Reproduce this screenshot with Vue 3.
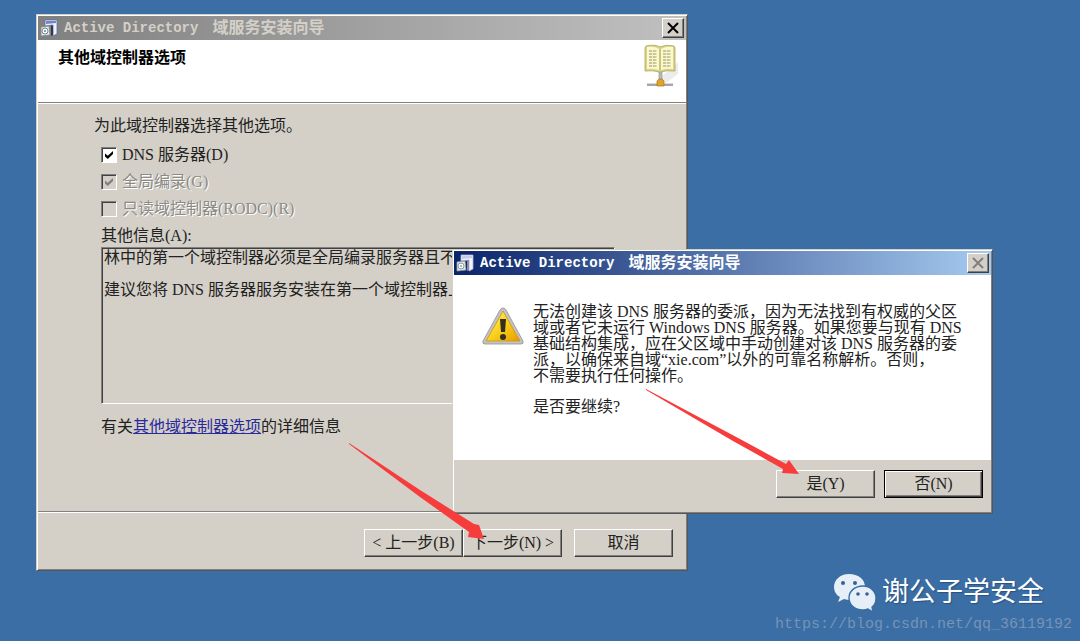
<script setup>
import { ref } from 'vue'

const title = { latin: 'Active Directory', han: '域服务安装向导' }

const options = ref([
  { id: 'opt-dns', label: 'DNS 服务器(D)', checked: true, disabled: false },
  { id: 'opt-gc', label: '全局编录(G)', checked: true, disabled: true },
  { id: 'opt-rodc', label: '只读域控制器(RODC)(R)', checked: false, disabled: true }
])

const info =
  '林中的第一个域控制器必须是全局编录服务器且不能\n\n建议您将 DNS 服务器服务安装在第一个域控制器上'

const warning = [
  '无法创建该 DNS 服务器的委派，因为无法找到有权威的父区',
  '域或者它未运行 Windows DNS 服务器。如果您要与现有 DNS',
  '基础结构集成，应在父区域中手动创建对该 DNS 服务器的委',
  '派，以确保来自域“xie.com”以外的可靠名称解析。否则，',
  '不需要执行任何操作。'
]
</script>

<template>
  <main class="desktop">
    <section class="window wizard" aria-label="安装向导">
      <header class="titlebar inactive">
        <svg class="app-icon" viewBox="0 0 18 18" aria-hidden="true">
          <path d="M5 1h12v14l-4 2V6L5 7z" fill="#eef2fd" stroke="#5a6ca4" stroke-width=".8" />
          <path d="M6 2h10v2L6 5z" fill="#6f86c8" />
          <path d="M1 8l8-1 1 9-9 1z" fill="#e8e8e8" stroke="#888" stroke-width=".8" />
          <circle cx="5" cy="12" r="3" fill="#fff" stroke="#6d8798" />
          <circle cx="5" cy="12" r="1" fill="#66808f" />
          <path d="M11 6l2 1v9l-2 1z" fill="#33384a" />
        </svg>
        <h1 class="caption"><span class="latin">{{ title.latin }}</span><span>{{ title.han }}</span></h1>
        <button class="close" type="button" aria-label="关闭">
          <svg viewBox="0 0 14 14"><path d="M2 2l10 10M12 2L2 12" /></svg>
        </button>
      </header>
      <div class="banner">
        <h2>其他域控制器选项</h2>
        <svg class="book" viewBox="0 0 40 46" aria-hidden="true">
          <path d="M20 34L38 18v12L26 39z" fill="#ececec" />
          <path d="M19 27h3v11h-3z" fill="#b9bcc4" stroke="#888" stroke-width=".6" />
          <path d="M7 39h26v3H7z" fill="#a4a6a8" />
          <path d="M7 39h26v1H7z" fill="#d7d7d7" />
          <path d="M17 37l2-2h3l2 2v5h-7z" fill="#dfa52a" stroke="#ad7514" stroke-width=".7" />
          <path d="M5 4l1-2q9-2 14 1q6-3 14-1l1 2v23q-9-1-14 1h-2q-6-2-14-1z" fill="#dbd58b" stroke="#aaa557" stroke-width=".8" />
          <path d="M7 3q8-1 12 2v21q-6-2-12-1z" fill="#fbf8ce" />
          <path d="M21 5q5-3 12-2v22q-7-1-12 1z" fill="#fbf8ce" />
          <path d="M19 5h2v21h-2z" fill="#cbc47b" />
          <path d="M9 7h8M9 10h8M9 13h8M9 16h8M9 19h8M9 22h8M23 7h8M23 10h8M23 13h8M23 16h8M23 19h8M23 22h8" stroke="#97915e" stroke-width="1.2" stroke-dasharray="3 .8" />
        </svg>
      </div>
      <div class="content">
        <p class="line">为此域控制器选择其他选项。</p>
        <div class="group">
          <div v-for="o in options" :key="o.id" class="option" :class="{ off: o.disabled }">
            <input :id="o.id" v-model="o.checked" type="checkbox" :disabled="o.disabled" />
            <label :for="o.id">{{ o.label }}</label>
          </div>
          <label class="line" for="info">其他信息(A):</label>
        </div>
        <textarea id="info" class="info" readonly :value="info"></textarea>
        <p class="line more">有关<a href="#options">其他域控制器选项</a>的详细信息</p>
      </div>
      <footer class="actions">
        <div class="pair">
          <button class="btn" type="button">&lt; 上一步(B)</button>
          <button class="btn" type="button">下一步(N) &gt;</button>
        </div>
        <button class="btn" type="button">取消</button>
      </footer>
    </section>

    <section class="window dialog" role="alertdialog" aria-labelledby="dlg-title" aria-describedby="dlg-text">
      <header class="titlebar active">
        <svg class="app-icon" viewBox="0 0 18 18" aria-hidden="true">
          <path d="M5 1h12v14l-4 2V6L5 7z" fill="#f3f4fb" stroke="#a9b2d4" stroke-width=".8" />
          <path d="M6 2h10v2L6 5z" fill="#c3cbe6" />
          <path d="M1 8l8-1 1 9-9 1z" fill="#e8e8e8" stroke="#999" stroke-width=".8" />
          <circle cx="5" cy="12" r="3" fill="#fff" stroke="#8299a8" />
          <circle cx="5" cy="12" r="1" fill="#8c9ba6" />
          <path d="M11 6l2 1v9l-2 1z" fill="#8a8da2" />
        </svg>
        <h1 id="dlg-title" class="caption"><span class="latin">{{ title.latin }}</span><span>{{ title.han }}</span></h1>
        <button class="close" type="button" aria-label="关闭" disabled>
          <svg viewBox="0 0 14 14"><path d="M2 2l10 10M12 2L2 12" /></svg>
        </button>
      </header>
      <div class="message">
        <svg class="warn" viewBox="0 0 42 38" aria-hidden="true">
          <defs>
            <linearGradient id="gold" x1="0" y1="0" x2="1" y2="1">
              <stop offset="0" stop-color="#fff27a" />
              <stop offset=".5" stop-color="#fbd21c" />
              <stop offset="1" stop-color="#e69a00" />
            </linearGradient>
          </defs>
          <path d="M21 1q2 0 3 2l17 31q1 3-2 3H3q-3 0-2-3L18 3q1-2 3-2z" fill="#c3c3c6" stroke="#8f8f94" stroke-width=".8" />
          <path d="M21 4L38 34H4z" fill="url(#gold)" stroke="#c99512" stroke-width=".8" />
          <path d="M18 12h6l-1 13h-4z" fill="#33301c" />
          <circle cx="21" cy="30" r="3" fill="#33301c" />
        </svg>
        <div id="dlg-text" class="text">
          <p><span v-for="w in warning" :key="w" class="row">{{ w }}</span></p>
          <p>是否要继续?</p>
        </div>
      </div>
      <footer class="choices">
        <button class="btn" type="button">是(Y)</button>
        <button class="btn default" type="button">否(N)</button>
      </footer>
    </section>

    <svg class="arrows" viewBox="0 0 1080 641" aria-hidden="true">
      <path d="M349 443L420 490L474 524L479 525L484 539L468 537L469 532L420 497L349 444z" />
      <path d="M646 389L740 439L786 464L789 460L799 474L782 473L783 469L733 441L646 390z" />
    </svg>

    <aside class="credit">
      <div class="brand">
        <svg class="wechat" viewBox="0 0 44 40" aria-hidden="true">
          <path d="M16 2C7 2 1 8 1 15c0 4 2 8 6 10l-2 5 6-3q3 1 6 1c8 0 15-5 15-13S25 2 16 2z" fill="#e6eef8" />
          <circle cx="10" cy="11" r="2" fill="#3a5f8c" />
          <circle cx="22" cy="11" r="2" fill="#3a5f8c" />
          <path d="M30 14c-8 0-14 5-14 12s6 12 14 12q3 0 5-1l5 3-1-5c3-2 4-5 4-9 0-7-6-12-13-12z" fill="#e6eef8" stroke="#3a6ea5" stroke-width="1.4" />
          <circle cx="25" cy="22" r="1.8" fill="#3a5f8c" />
          <circle cx="34" cy="22" r="1.8" fill="#3a5f8c" />
        </svg>
        <span>谢公子学安全</span>
      </div>
      <div class="url">https://blog.csdn.net/qq_36119192</div>
    </aside>
  </main>
</template>

<style>
body {
  margin: 0;
}
</style>

<style scoped>
.desktop {
  position: relative;
  min-height: 100vh;
  overflow: hidden;
  background: #3a6ea5;
  color: #222;
  font: 16px/20px "Liberation Serif", "Noto Sans CJK SC", serif;
}
.desktop * {
  box-sizing: border-box;
}
h1,
h2,
p {
  margin: 0;
  font-size: 16px;
}
.window {
  position: absolute;
  display: flex;
  flex-direction: column;
  padding: 1px;
  border: 1px solid;
  border-color: #d4d0c8 #555 #555 #d4d0c8;
  background: #d4d0c8;
  box-shadow: inset 1px 1px #fff, inset -1px -1px #808080;
}
.wizard {
  left: 36px;
  top: 14px;
  width: 652px;
}
.dialog {
  left: 452px;
  top: 249px;
  width: 541px;
}
.titlebar {
  display: flex;
  align-items: center;
  height: 24px;
  padding: 0 2px;
}
.inactive {
  background: linear-gradient(90deg, #808080, #c0c0c0);
  color: #d4d0c8;
}
.active {
  background: linear-gradient(90deg, #0a246a, #a6caf0);
  color: #fff;
}
.app-icon {
  width: 18px;
  height: 18px;
  flex: none;
}
.caption {
  display: flex;
  flex: 1;
  gap: 14px;
  margin-left: 6px;
  font-weight: bold;
  white-space: nowrap;
}
.latin {
  font-family: "Liberation Mono", monospace;
  font-size: 14px;
}
.close {
  display: grid;
  place-items: center;
  width: 22px;
  height: 20px;
  padding: 0;
  border: 1px solid;
  border-color: #fff #404040 #404040 #fff;
  background: #d4d0c8;
  box-shadow: inset -1px -1px #808080;
}
.close svg {
  width: 14px;
  height: 14px;
  fill: none;
  stroke: #000;
  stroke-width: 2;
}
.close:disabled svg {
  stroke: #808080;
}
.banner {
  display: flex;
  justify-content: space-between;
  height: 63px;
  padding: 4px 6px 0 20px;
  border-bottom: 1px solid #808080;
  background: #fff;
  color: #000;
}
.banner h2 {
  padding-top: 4px;
}
.book {
  width: 40px;
  height: 46px;
}
.content {
  display: flex;
  flex-direction: column;
  min-height: 408px;
  padding: 12px 71px 0 56px;
  border-top: 1px solid #fff;
}
.line {
  line-height: 20px;
}
.group {
  display: flex;
  flex-direction: column;
  gap: 7px;
  margin: 9px 0 1px 7px;
}
.option {
  display: flex;
  align-items: center;
  gap: 5px;
}
.option input {
  appearance: none;
  display: grid;
  place-items: center;
  width: 16px;
  height: 16px;
  margin: 0;
  border: 1px solid;
  border-color: #808080 #fff #fff #808080;
  background: #fff;
  box-shadow: inset 1px 1px #404040;
  color: #000;
}
.option input:disabled {
  background: #d4d0c8;
  color: #808080;
}
.option input:checked::after {
  content: "";
  width: 8px;
  height: 8px;
  background: currentColor;
  clip-path: polygon(0 30%, 35% 60%, 100% 0, 100% 38%, 35% 100%, 0 68%);
}
.off label {
  color: #8c8a86;
  text-shadow: 1px 1px #fff;
}
.info {
  height: 157px;
  margin: 0 0 0 7px;
  padding: 2px;
  border: 1px solid;
  border-color: #808080 #fff #fff #808080;
  outline: none;
  background: #d4d0c8;
  box-shadow: inset 1px 1px #404040;
  color: inherit;
  font: inherit;
  line-height: 16px;
  resize: none;
}
.more {
  margin: 13px 0 0 7px;
}
.more a {
  color: #2a2a9c;
}
.actions {
  display: flex;
  justify-content: flex-end;
  gap: 12px;
  padding: 17px 13px 12px;
  border-top: 1px solid #808080;
  box-shadow: inset 0 1px #fff;
}
.pair {
  display: flex;
}
.btn {
  width: 99px;
  height: 28px;
  padding: 0;
  border: 1px solid;
  border-color: #fff #404040 #404040 #fff;
  background: #d4d0c8;
  box-shadow: inset -1px -1px #808080;
  color: inherit;
  font: inherit;
  line-height: 20px;
  white-space: nowrap;
}
.default {
  border-color: #000;
  box-shadow: inset 1px 1px #fff, inset -1px -1px #404040, inset -2px -2px #808080;
}
.message {
  display: flex;
  gap: 9px;
  min-height: 185px;
  padding: 29px 28px 0;
  background: #fff;
}
.warn {
  flex: none;
  width: 42px;
  height: 38px;
  margin-top: 3px;
}
.text {
  display: flex;
  flex-direction: column;
  gap: 15px;
  line-height: 16px;
  white-space: nowrap;
}
.row {
  display: block;
}
.choices {
  display: flex;
  justify-content: flex-end;
  gap: 9px;
  padding: 10px 8px 14px;
}
.arrows {
  position: absolute;
  left: 0;
  top: 0;
  width: 1080px;
  height: 641px;
  fill: #f73c3c;
  pointer-events: none;
}
.credit {
  position: absolute;
  right: 8px;
  bottom: 6px;
  display: flex;
  flex-direction: column;
  align-items: flex-end;
  gap: 3px;
}
.brand {
  display: flex;
  align-items: center;
  gap: 5px;
  margin-right: 28px;
  color: #fff;
  font-size: 27px;
  line-height: 40px;
  text-shadow: 1px 1px 1px #28527f;
}
.wechat {
  width: 44px;
  height: 40px;
}
.url {
  color: #7793b8;
  font: 15px/20px "Liberation Mono", monospace;
}
</style>
